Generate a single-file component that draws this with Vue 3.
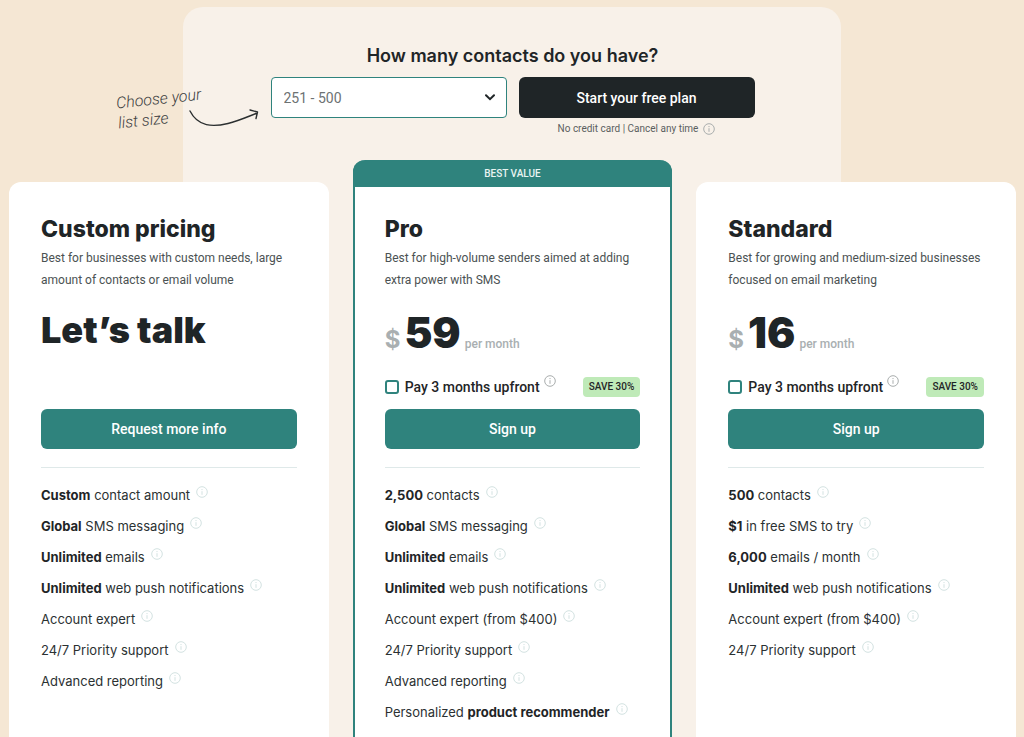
<template>
  <main class="pricing">
    <div class="backdrop"></div>
    <div class="content">
      <header class="picker">
        <h1 class="picker-title">How many contacts do you have?</h1>
        <div class="hint">
          <span class="hint-text">Choose your<br />list size</span>
          <svg class="hint-arrow" viewBox="0 0 70 22" fill="none" aria-hidden="true">
            <path d="M1 4C9 20 24 20 39 16.5C49 14 58 10 67 6.5M61 3L68.5 5L67 11.5" />
          </svg>
        </div>
        <div class="select-wrap">
          <select v-model="listSize" aria-label="How many contacts do you have?">
            <option v-for="size in listSizes" :key="size" :value="size">{{ size }}</option>
          </select>
          <svg class="chevron" viewBox="0 0 10 7" fill="none" aria-hidden="true">
            <path d="M1 1.2L5 5.2L9 1.2" />
          </svg>
        </div>
        <button type="button" class="btn btn-dark">Start your free plan</button>
        <p class="picker-note">
          No credit card | Cancel any time
          <svg class="info" viewBox="0 0 12 12" aria-hidden="true">
            <circle cx="6" cy="6" r="5.3" />
            <path d="M6 5.2V8.8M6 3V4.1" />
          </svg>
        </p>
      </header>

      <section class="plans">
        <article
          v-for="plan in plans"
          :key="plan.id"
          class="plan"
          :class="{ 'is-best': plan.best }"
        >
          <div v-if="plan.best" class="banner">BEST VALUE</div>
          <div class="plan-body">
            <h2 class="plan-name">{{ plan.name }}</h2>
            <p class="plan-desc">{{ plan.desc }}</p>

            <div class="offer">
              <p v-if="plan.price" class="price">
                <span class="currency">$</span>
                <span class="amount">{{ plan.price }}</span>
                <span class="period">per month</span>
              </p>
              <p v-else class="talk">Let’s talk</p>
              <div v-if="plan.price" class="upfront">
                <input :id="`upfront-${plan.id}`" v-model="plan.upfront" type="checkbox" />
                <label :for="`upfront-${plan.id}`">Pay 3 months upfront</label>
                <svg class="info" viewBox="0 0 12 12" aria-hidden="true">
                  <circle cx="6" cy="6" r="5.3" />
                  <path d="M6 5.2V8.8M6 3V4.1" />
                </svg>
                <span class="save">SAVE 30%</span>
              </div>
            </div>

            <button type="button" class="btn">{{ plan.action }}</button>

            <ul class="features">
              <li v-for="(feature, i) in plan.features" :key="i">
                <span>
                  <template v-for="(part, j) in feature" :key="j">
                    <strong v-if="part.bold">{{ part.text }}</strong>
                    <template v-else>{{ part.text }}</template>
                  </template>
                </span>
                <svg class="info" viewBox="0 0 12 12" aria-hidden="true">
                  <circle cx="6" cy="6" r="5.3" />
                  <path d="M6 5.2V8.8M6 3V4.1" />
                </svg>
              </li>
            </ul>
          </div>
        </article>
      </section>
    </div>
  </main>
</template>

<script setup>
import { ref } from 'vue'

const listSizes = ['0 - 250', '251 - 500', '501 - 1,000', '1,001 - 2,500']
const listSize = ref('251 - 500')

const b = (text) => ({ text, bold: true })
const t = (text) => ({ text, bold: false })

const plans = ref([
  {
    id: 'custom',
    name: 'Custom pricing',
    desc: 'Best for businesses with custom needs, large amount of contacts or email volume',
    action: 'Request more info',
    features: [
      [b('Custom'), t(' contact amount')],
      [b('Global'), t(' SMS messaging')],
      [b('Unlimited'), t(' emails')],
      [b('Unlimited'), t(' web push notifications')],
      [t('Account expert')],
      [t('24/7 Priority support')],
      [t('Advanced reporting')],
    ],
  },
  {
    id: 'pro',
    name: 'Pro',
    best: true,
    desc: 'Best for high-volume senders aimed at adding extra power with SMS',
    price: 59,
    upfront: false,
    action: 'Sign up',
    features: [
      [b('2,500'), t(' contacts')],
      [b('Global'), t(' SMS messaging')],
      [b('Unlimited'), t(' emails')],
      [b('Unlimited'), t(' web push notifications')],
      [t('Account expert (from $400)')],
      [t('24/7 Priority support')],
      [t('Advanced reporting')],
      [t('Personalized '), b('product recommender')],
    ],
  },
  {
    id: 'standard',
    name: 'Standard',
    desc: 'Best for growing and medium-sized businesses focused on email marketing',
    price: 16,
    upfront: false,
    action: 'Sign up',
    features: [
      [b('500'), t(' contacts')],
      [b('$1'), t(' in free SMS to try')],
      [b('6,000'), t(' emails / month')],
      [b('Unlimited'), t(' web push notifications')],
      [t('Account expert (from $400)')],
      [t('24/7 Priority support')],
    ],
  },
])
</script>

<style>
body {
  background: #f5e7d4;
}
</style>

<style scoped>
.pricing {
  display: grid;
  grid-template-columns: minmax(0, 1fr);
  min-height: 100vh;
  color: #1f2527;
  font-family: Roboto, 'Liberation Sans', sans-serif;
}

.pricing * {
  box-sizing: border-box;
}

.backdrop,
.content {
  grid-area: 1 / 1;
}

.backdrop {
  width: 64.3%;
  margin: 7px auto 0;
  border-radius: 20px 20px 0 0;
  background: #f8f1e9;
}

.content {
  display: flex;
  flex-direction: column;
  padding: 44px 8px 0 9px;
}

h1,
h2,
p,
ul {
  margin: 0;
  padding: 0;
}

.picker {
  display: grid;
  grid-template-columns: 1fr minmax(0, 236px) minmax(0, 236px) 1fr;
  column-gap: 12px;
}

.picker-title {
  grid-column: 1 / -1;
  margin-bottom: 9px;
  font-family: Inter, sans-serif;
  font-size: 18px;
  font-weight: 600;
  line-height: 24px;
  text-align: center;
}

.hint {
  display: flex;
  justify-content: flex-end;
  align-items: flex-end;
  height: 52px;
}

.hint-text {
  transform: rotate(-6deg);
  color: #3c403f;
  font-size: 16px;
  font-style: italic;
  font-weight: 300;
  line-height: 20px;
  white-space: nowrap;
}

.hint-arrow {
  flex: none;
  width: 70px;
  height: 22px;
  margin-left: -14px;
  stroke: #2b2f30;
  stroke-width: 1.4;
  stroke-linecap: round;
  stroke-linejoin: round;
}

.select-wrap {
  display: grid;
  align-items: center;
  height: 41px;
}

.select-wrap > * {
  grid-area: 1 / 1;
}

.select-wrap select {
  appearance: none;
  width: 100%;
  height: 100%;
  padding: 0 36px 0 12px;
  border: 1px solid #2f837d;
  border-radius: 4px;
  background: #fff;
  color: #6d7273;
  font: 400 14px Roboto, sans-serif;
}

.chevron {
  justify-self: end;
  width: 10px;
  height: 7px;
  margin-right: 12px;
  stroke: #1f2527;
  stroke-width: 2;
  stroke-linecap: round;
  pointer-events: none;
}

.btn {
  width: 100%;
  height: 40px;
  padding: 0 16px;
  border: 0;
  border-radius: 6px;
  background: #2f837d;
  color: #fff;
  font: 500 14px Roboto, sans-serif;
  cursor: pointer;
}

.btn-dark {
  height: 41px;
  background: #1f2527;
}

.picker-note {
  grid-column: 3;
  display: flex;
  justify-content: center;
  align-items: center;
  gap: 5px;
  margin-top: -11px;
  color: #5b5f5f;
  font-size: 10px;
  line-height: 22px;
}

.info {
  flex: none;
  width: 12px;
  height: 12px;
  fill: none;
  stroke: #a9adad;
  stroke-width: 1;
}

.plans {
  display: grid;
  flex: 1;
  grid-template-columns: repeat(3, minmax(0, 1fr));
  gap: 24px;
  margin-top: 20px;
}

.plan {
  margin-top: 22px;
  border-radius: 12px 12px 0 0;
  background: #fff;
}

.plan.is-best {
  margin-top: 0;
  border: 2px solid #2f837d;
  border-width: 0 2px;
}

.banner {
  margin: 0 -2px;
  border-radius: 12px 12px 0 0;
  background: #2f837d;
  color: #e8f4f2;
  font-size: 10px;
  font-weight: 500;
  line-height: 27px;
  text-align: center;
}

.plan-body {
  padding: 33px 32px 8px;
}

.is-best .plan-body {
  padding: 28px 30px 8px;
}

.plan-name {
  font-family: Inter, sans-serif;
  font-size: 23px;
  font-weight: 800;
  line-height: 28px;
}

.plan-desc {
  margin-top: 4px;
  color: #4b5253;
  font-size: 12px;
  font-weight: 400;
  line-height: 22px;
}

.offer {
  display: flex;
  flex-direction: column;
  justify-content: space-between;
  height: 88px;
  margin: 18px 0 12px;
}

.price {
  display: flex;
  align-items: baseline;
  gap: 4px;
  line-height: 48px;
}

.currency {
  color: #a9afb1;
  font-family: Inter, sans-serif;
  font-size: 24px;
  font-weight: 700;
}

.amount {
  font-family: Inter, sans-serif;
  font-size: 42px;
  font-weight: 900;
}

.period {
  color: #a9afb1;
  font-size: 12px;
  font-weight: 500;
}

.talk {
  font-family: Inter, sans-serif;
  font-size: 36px;
  font-weight: 900;
  line-height: 42px;
}

.upfront {
  display: flex;
  align-items: center;
  height: 20px;
  font-size: 14px;
  font-weight: 500;
}

.upfront input {
  appearance: none;
  width: 14px;
  height: 14px;
  margin: 0 6px 0 0;
  border: 2px solid #2f837d;
  border-radius: 3px;
  background: #fff;
}

.upfront input:checked {
  background: #2f837d;
}

.upfront .info {
  align-self: flex-start;
  margin: -2px 0 0 4px;
}

.save {
  margin-left: auto;
  padding: 0 6px;
  border-radius: 4px;
  background: #bfeab8;
  font-size: 10px;
  line-height: 20px;
}

.features {
  margin-top: 18px;
  padding-top: 11px;
  border-top: 1px solid #dfe9e9;
  list-style: none;
}

.features li {
  display: flex;
  align-items: center;
  gap: 6px;
  height: 31px;
  color: #2b3132;
  font-family: Inter, sans-serif;
  font-size: 13px;
}

.features span {
  white-space: pre-wrap;
}

.features strong {
  color: #1f2527;
  font-weight: 700;
}

.features .info {
  margin-bottom: 6px;
  stroke: #d3e2e1;
}
</style>
